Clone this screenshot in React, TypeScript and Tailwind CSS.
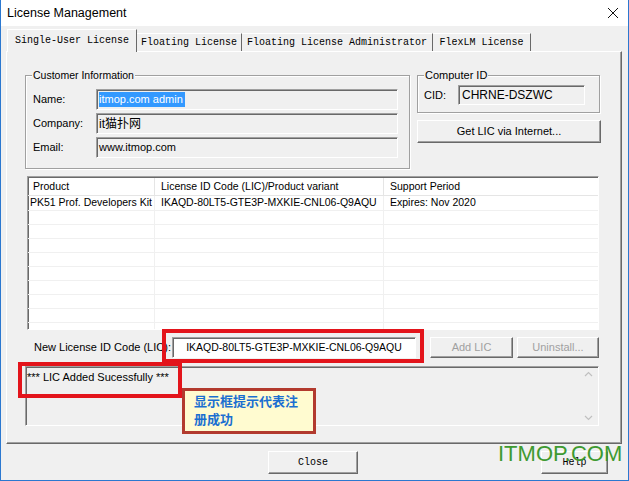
import React from "react";

const sunken =
  "border border-t-[#a0a0a0] border-l-[#a0a0a0] border-r-white border-b-white shadow-[inset_1px_1px_0_#696969]";
const raised =
  "border border-t-white border-l-white border-r-[#696969] border-b-[#696969] shadow-[inset_-1px_-1px_0_#a0a0a0]";
const group =
  "relative border border-[#a0a0a0] shadow-[inset_1px_1px_0_#ffffff,1px_1px_0_#ffffff]";
const mono = "font-['Liberation_Mono','Courier_New',monospace] text-[10px]";

function Tab({ label, w, selected }: { label: string; w: string; selected?: boolean }) {
  if (selected) {
    return (
      <div
        className={`relative z-10 -mb-px h-[23px] ${w} bg-[#f0f0f0] border-t border-l border-white border-r border-r-[#696969] flex items-center justify-center pb-[2px] ${mono} text-black`}
      >
        {label}
      </div>
    );
  }
  return (
    <div
      className={`h-[18px] ${w} border-t border-white border-r border-r-[#696969] flex items-center justify-center ${mono} text-black`}
    >
      {label}
    </div>
  );
}

export default function App() {
  const rows = Array.from({ length: 10 });
  return (
    <div className="relative w-[629px] h-[481px] bg-[#f0f0f0] border-x border-b border-[#2b78d0] overflow-hidden flex flex-col font-['Liberation_Sans',Arial,sans-serif] text-[11px] text-black">
      {/* Title bar */}
      <div className="h-[26px] bg-white flex items-center justify-between pl-[6px] pr-[9px] shrink-0">
        <span className="text-[12.5px] text-black">License Management</span>
        <svg width="12" height="12" viewBox="0 0 12 12">
          <path d="M1 1 L11 11 M11 1 L1 11" stroke="#111" strokeWidth="1" />
        </svg>
      </div>

      {/* Tabs */}
      <div className="h-[25px] flex items-end pl-[6px] shrink-0">
        <Tab label="Single-User License" w="w-[130px]" selected />
        <Tab label="Floating License" w="w-[105px]" />
        <Tab label="Floating License Administrator" w="w-[191px]" />
        <Tab label="FlexLM License" w="w-[98px]" />
      </div>

      {/* Tab page */}
      <div className="ml-[5px] w-[616px] h-[393px] shrink-0 border-t border-l border-white border-r border-b border-r-[#696969] border-b-[#696969] shadow-[inset_-1px_-1px_0_#a0a0a0] flex flex-col pl-[18px] pt-[23px]">
        {/* Top section */}
        <div className="flex gap-[7px]">
          {/* Customer Information */}
          <div className={`${group} w-[385px] h-[94px] pt-[13px] pl-[7px] flex flex-col gap-[3px]`}>
            <span className="absolute left-[6px] -top-[8px] bg-[#f0f0f0] px-[1px] leading-[14px] text-[10.5px]">
              Customer Information
            </span>
            <div className="flex items-center">
              <span className="w-[63px]">Name:</span>
              <div className={`${sunken} w-[302px] h-[21px] flex items-center pl-[2px]`}>
                <span className="bg-[#3399ff] text-white leading-[15px] pr-[2px]">itmop.com admin</span>
              </div>
            </div>
            <div className="flex items-center">
              <span className="w-[63px]">Company:</span>
              <div className={`${sunken} w-[302px] h-[21px] flex items-center pl-[2px] font-['Liberation_Sans','Noto_Sans_CJK_SC',sans-serif] text-[12px]`}>
                it猫扑网
              </div>
            </div>
            <div className="flex items-center">
              <span className="w-[63px]">Email:</span>
              <div className={`${sunken} w-[302px] h-[21px] flex items-center pl-[2px]`}>
                www.itmop.com
              </div>
            </div>
          </div>

          {/* Right column */}
          <div className="w-[184px] flex flex-col">
            <div className={`${group} w-[183px] h-[38px] pt-[9px] pl-[6px] flex`}>
              <span className="absolute left-[6px] -top-[8px] bg-[#f0f0f0] px-[1px] leading-[14px]">
                Computer ID
              </span>
              <div className="flex items-center h-[20px]">
                <span className="w-[34px]">CID:</span>
                <div className={`${sunken} w-[127px] h-[20px] flex items-center pl-[3px] text-[12px]`}>
                  CHRNE-DSZWC
                </div>
              </div>
            </div>
            <div className={`${raised} mt-[7px] w-[184px] h-[23px] flex items-center justify-center`}>
              Get LIC via Internet...
            </div>
          </div>
        </div>

        {/* List view */}
        <div className={`${sunken} mt-[7px] ml-[2px] w-[572px] h-[154px] bg-white overflow-hidden flex flex-col text-[10.5px]`}>
          <div className="h-[18px] shrink-0 flex border-b border-[#e5e5e5] mt-[1px]">
            <div className="w-[127px] pl-[5px] border-r border-[#e5e5e5] flex items-center">Product</div>
            <div className="w-[229px] pl-[6px] border-r border-[#e5e5e5] flex items-center">
              License ID Code (LIC)/Product variant
            </div>
            <div className="flex-1 pl-[6px] flex items-center">Support Period</div>
          </div>
          {rows.map((_, i) => (
            <div key={i} className={`${i === 0 ? "h-[15px]" : "h-[14px]"} shrink-0 flex border-b border-[#f0f0f0]`}>
              <div className="w-[127px] pl-[2px] border-r border-[#f0f0f0] flex items-center whitespace-nowrap">
                {i === 0 ? "PK51 Prof. Developers Kit" : ""}
              </div>
              <div className="w-[229px] pl-[6px] border-r border-[#f0f0f0] flex items-center whitespace-nowrap">
                {i === 0 ? "IKAQD-80LT5-GTE3P-MXKIE-CNL06-Q9AQU" : ""}
              </div>
              <div className="flex-1 pl-[6px] flex items-center">{i === 0 ? "Expires: Nov 2020" : ""}</div>
            </div>
          ))}
        </div>

        {/* New License row */}
        <div className="mt-[7px] h-[21px] flex items-center">
          <span className="w-[147px] pl-[9px] whitespace-nowrap overflow-hidden">New License ID Code (LIC):</span>
          <div className={`${sunken} w-[244px] h-[21px] bg-white flex items-center justify-center text-[10.5px]`}>
            IKAQD-80LT5-GTE3P-MXKIE-CNL06-Q9AQU
          </div>
          <div className={`${raised} ml-[14px] w-[83px] h-[21px] flex items-center justify-center text-[#a0a0a0]`}>
            Add LIC
          </div>
          <div className={`${raised} ml-[4px] w-[82px] h-[21px] flex items-center justify-center text-[#a0a0a0]`}>
            Uninstall...
          </div>
        </div>

        {/* Message box */}
        <div className={`${sunken} mt-[8px] w-[574px] h-[60px] flex`}>
          <div className="flex-1 pl-[1px] pt-[2px]">*** LIC Added Sucessfully ***</div>
          <div className="w-[17px] flex flex-col justify-between items-center py-[4px] mr-[1px]">
            <svg width="9" height="6" viewBox="0 0 9 6">
              <path d="M1 5 L4.5 1.5 L8 5" stroke="#c0c0c0" strokeWidth="1.2" fill="none" />
            </svg>
            <svg width="9" height="6" viewBox="0 0 9 6">
              <path d="M1 1 L4.5 4.5 L8 1" stroke="#c0c0c0" strokeWidth="1.2" fill="none" />
            </svg>
          </div>
        </div>
      </div>

      {/* Bottom buttons */}
      <div className="mt-[7px] flex">
        <div className={`${raised} ml-[267px] w-[90px] h-[23px] flex items-center justify-center ${mono}`}>
          Close
        </div>
        <div className={`${raised} ml-[183px] w-[67px] h-[23px] flex items-center justify-center ${mono}`}>
          Help
        </div>
      </div>

      {/* Annotations */}
      <div className="absolute left-[161px] top-[329px] w-[262px] h-[34px] border-4 border-[#e3141b]" />
      <div className="absolute left-[17px] top-[362px] w-[164px] h-[36px] border-4 border-[#e3141b]" />
      <div className="absolute left-[181px] top-[388px] w-[134px] h-[46px] border-[3px] border-[#b23a2e] bg-[#fffbd0] pl-[9px] pt-[1px] font-['Noto_Sans_CJK_SC',sans-serif] font-bold text-[13px] leading-[18px] text-[#1b6fd1]">
        显示框提示代表注<br />册成功
      </div>
      <div className="absolute left-[497px] top-[440px] text-[22px] leading-[28px] text-[#3e9a31] font-['Liberation_Sans',Arial,sans-serif]">
        ITMOP.COM
      </div>
    </div>
  );
}
